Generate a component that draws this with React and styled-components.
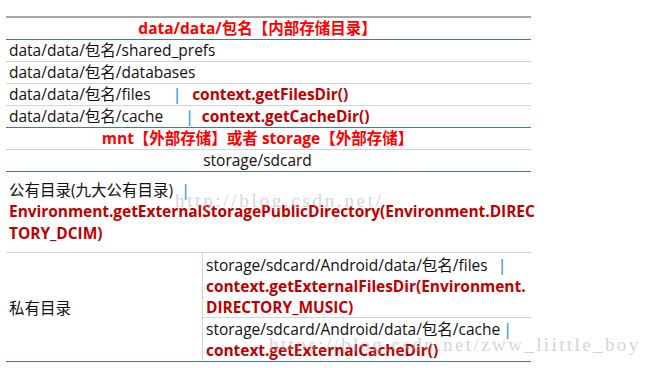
import React from 'react';
import styled, { createGlobalStyle } from 'styled-components';

const GlobalStyle = createGlobalStyle`
  html, body {
    margin: 0;
    padding: 0;
    background: #fff;
  }
  body {
    font-family: "Open Sans", "Noto Sans CJK SC", sans-serif;
    font-size: 15.5px;
    color: #111;
  }
`;

const Page = styled.div`
  position: relative;
  width: 648px;
  height: 368px;
  padding: 16px 0 0 6px;
  box-sizing: border-box;
  overflow: hidden;
`;

const Table = styled.div`
  width: 525px;
  border-top: 2px solid #a6a6a6;
`;

const Row = styled.div`
  display: flex;
  align-items: center;
  justify-content: ${p => (p.center ? 'center' : 'flex-start')};
  height: ${p => p.h || 21}px;
  padding: ${p => (p.center ? '0 22px 0 0' : '0 0 0 3px')};
  border-bottom: 1px solid ${p => (p.blue ? '#4472c4' : '#d4d4d4')};
  line-height: 21px;
  white-space: nowrap;
`;

const Title = styled.span`
  color: #ff0000;
  font-weight: 700;
`;

const Code = styled.span`
  color: #c00000;
  font-weight: 700;
  letter-spacing: -0.05px;
`;

const Bar = styled.span`
  color: #3a9ae8;
  font-weight: 600;
  margin: 0 ${p => p.r || 10}px 0 ${p => p.l || 0}px;
`;

const Block = styled.div`
  padding: ${p => p.pt || 0}px 0 0 ${p => (p.flush ? 0 : 3)}px;
  line-height: ${p => p.lh || 21}px;
  white-space: nowrap;
`;

const Split = styled.div`
  display: grid;
  grid-template-columns: 197px 1fr;
  height: 108px;
  border-bottom: 1px solid #4472c4;
`;

const Label = styled.div`
  display: flex;
  align-items: center;
  padding-left: 3px;
  border-right: 1px solid #d4d4d4;
`;

const Stack = styled.div`
  display: grid;
  grid-template-rows: 65px 1fr;
`;

const Cell = styled.div`
  border-bottom: ${p => (p.last ? 'none' : '1px solid #d4d4d4')};
`;

const Watermark = styled.div`
  position: absolute;
  left: ${p => p.x}px;
  top: ${p => p.y}px;
  font-family: "Liberation Serif", serif;
  font-size: 19px;
  letter-spacing: ${p => p.ls}px;
  color: rgba(170, 170, 170, 0.5);
  white-space: nowrap;
  pointer-events: none;
`;

export default function App() {
  return (
    <>
      <GlobalStyle />
      <Page>
        <Table>
          <Row center blue>
            <Title>data/data/包名【内部存储目录】</Title>
          </Row>
          <Row>data/data/包名/shared_prefs</Row>
          <Row>data/data/包名/databases</Row>
          <Row>
            data/data/包名/files<Bar l={22} r={11}>|</Bar>
            <Code>context.getFilesDir()</Code>
          </Row>
          <Row blue>
            data/data/包名/cache<Bar l={22} r={8}>|</Bar>
            <Code>context.getCacheDir()</Code>
          </Row>
          <Row center>
            <Title>mnt【外部存储】或者 storage【外部存储】</Title>
          </Row>
          <Row center blue>storage/sdcard</Row>
          <Row h={80}>
            <Block flush lh={21.5}>
              <div>
                公有目录(九大公有目录)<Bar l={8}>|</Bar>
              </div>
              <Code as="div">Environment.getExternalStoragePublicDirectory(Environment.DIREC</Code>
              <Code as="div">TORY_DCIM)</Code>
            </Block>
          </Row>
          <Split>
            <Label>私有目录</Label>
            <Stack>
              <Cell>
                <Block pt={2}>
                  <div>
                    storage/sdcard/Android/data/包名/files<Bar l={10}>|</Bar>
                  </div>
                  <Code as="div">context.getExternalFilesDir(Environment.</Code>
                  <Code as="div">DIRECTORY_MUSIC)</Code>
                </Block>
              </Cell>
              <Cell last>
                <Block pt={1}>
                  <div>
                    storage/sdcard/Android/data/包名/cache<Bar l={3}>|</Bar>
                  </div>
                  <Code as="div">context.getExternalCacheDir()</Code>
                </Block>
              </Cell>
            </Stack>
          </Split>
        </Table>
        <Watermark x={175} y={190} ls={2.7}>http://blog.csdn.net/</Watermark>
        <Watermark x={269} y={334} ls={2.4}>https://blog.csdn.net/zww_liittle_boy</Watermark>
      </Page>
    </>
  );
}
